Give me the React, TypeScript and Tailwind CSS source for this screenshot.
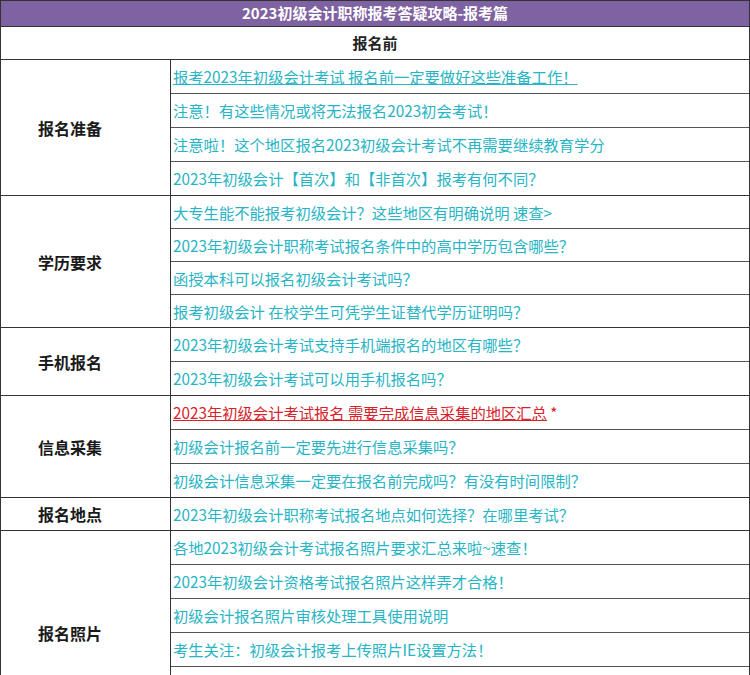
const groups: { label: string; rows: { t: string; h: number; red?: boolean; u?: boolean }[] }[] = [
  { label: "报名准备", rows: [
    { t: "报考2023年初级会计考试 报名前一定要做好这些准备工作！", h: 34, u: true },
    { t: "注意！有这些情况或将无法报名2023初会考试！", h: 34 },
    { t: "注意啦！这个地区报名2023初级会计考试不再需要继续教育学分", h: 34 },
    { t: "2023年初级会计【首次】和【非首次】报考有何不同？", h: 34 },
  ]},
  { label: "学历要求", rows: [
    { t: "大专生能不能报考初级会计？这些地区有明确说明 速查>", h: 33 },
    { t: "2023年初级会计职称考试报名条件中的高中学历包含哪些？", h: 33 },
    { t: "函授本科可以报名初级会计考试吗？", h: 33 },
    { t: "报考初级会计 在校学生可凭学生证替代学历证明吗？", h: 33 },
  ]},
  { label: "手机报名", rows: [
    { t: "2023年初级会计考试支持手机端报名的地区有哪些？", h: 34 },
    { t: "2023年初级会计考试可以用手机报名吗？", h: 34 },
  ]},
  { label: "信息采集", rows: [
    { t: "2023年初级会计考试报名 需要完成信息采集的地区汇总", h: 34, red: true },
    { t: "初级会计报名前一定要先进行信息采集吗？", h: 34 },
    { t: "初级会计信息采集一定要在报名前完成吗？有没有时间限制？", h: 34 },
  ]},
  { label: "报名地点", rows: [
    { t: "2023年初级会计职称考试报名地点如何选择？在哪里考试？", h: 33 },
  ]},
  { label: "报名照片", rows: [
    { t: "各地2023初级会计考试报名照片要求汇总来啦~速查！", h: 34 },
    { t: "2023年初级会计资格考试报名照片这样弄才合格！", h: 34 },
    { t: "初级会计报名照片审核处理工具使用说明", h: 34 },
    { t: "考生关注：初级会计报考上传照片IE设置方法！", h: 34 },
    { t: "", h: 34 },
    { t: "", h: 34 },
  ]},
];

export default function App() {
  const font = { fontFamily: '"Noto Sans CJK SC", "Noto Sans", sans-serif' };
  return (
    <div className="w-[750px] h-[675px] overflow-hidden bg-white" style={font}>
      <div className="border border-[#333] border-b-0">
        <div className="h-[26px] bg-[#7f62a1] text-white font-bold text-[15px] flex items-center justify-center border-b border-[#333]">2023初级会计职称报考答疑攻略-报考篇</div>
        <div className="h-[33px] text-[#222] font-bold text-[15px] flex items-center justify-center border-b border-[#333]">报名前</div>
        {groups.map((g, gi) => (
          <div key={gi} className="flex border-b border-[#333]">
            <div className="w-[170px] shrink-0 border-r border-[#333] flex items-center pl-[37px] font-bold text-[16px] text-[#1a1a1a]">{g.label}</div>
            <div className="flex-1 flex flex-col">
              {g.rows.map((r, ri) => (
                <div key={ri} style={{ height: r.h - (ri < g.rows.length - 1 ? 0 : 1) }} className={`flex items-center pl-[2px] text-[15.3px] whitespace-nowrap ${ri < g.rows.length - 1 ? "border-b border-[#555]" : ""}`}>
                  {r.red ? (
                    <span><span className="text-[#d9212b] underline">{r.t}</span><span className="text-[#d9212b]"> *</span></span>
                  ) : (
                    <span className={`text-[#27b4c4] ${r.u ? "underline" : ""}`}>{r.t}</span>
                  )}
                </div>
              ))}
            </div>
          </div>
        ))}
      </div>
    </div>
  );
}
